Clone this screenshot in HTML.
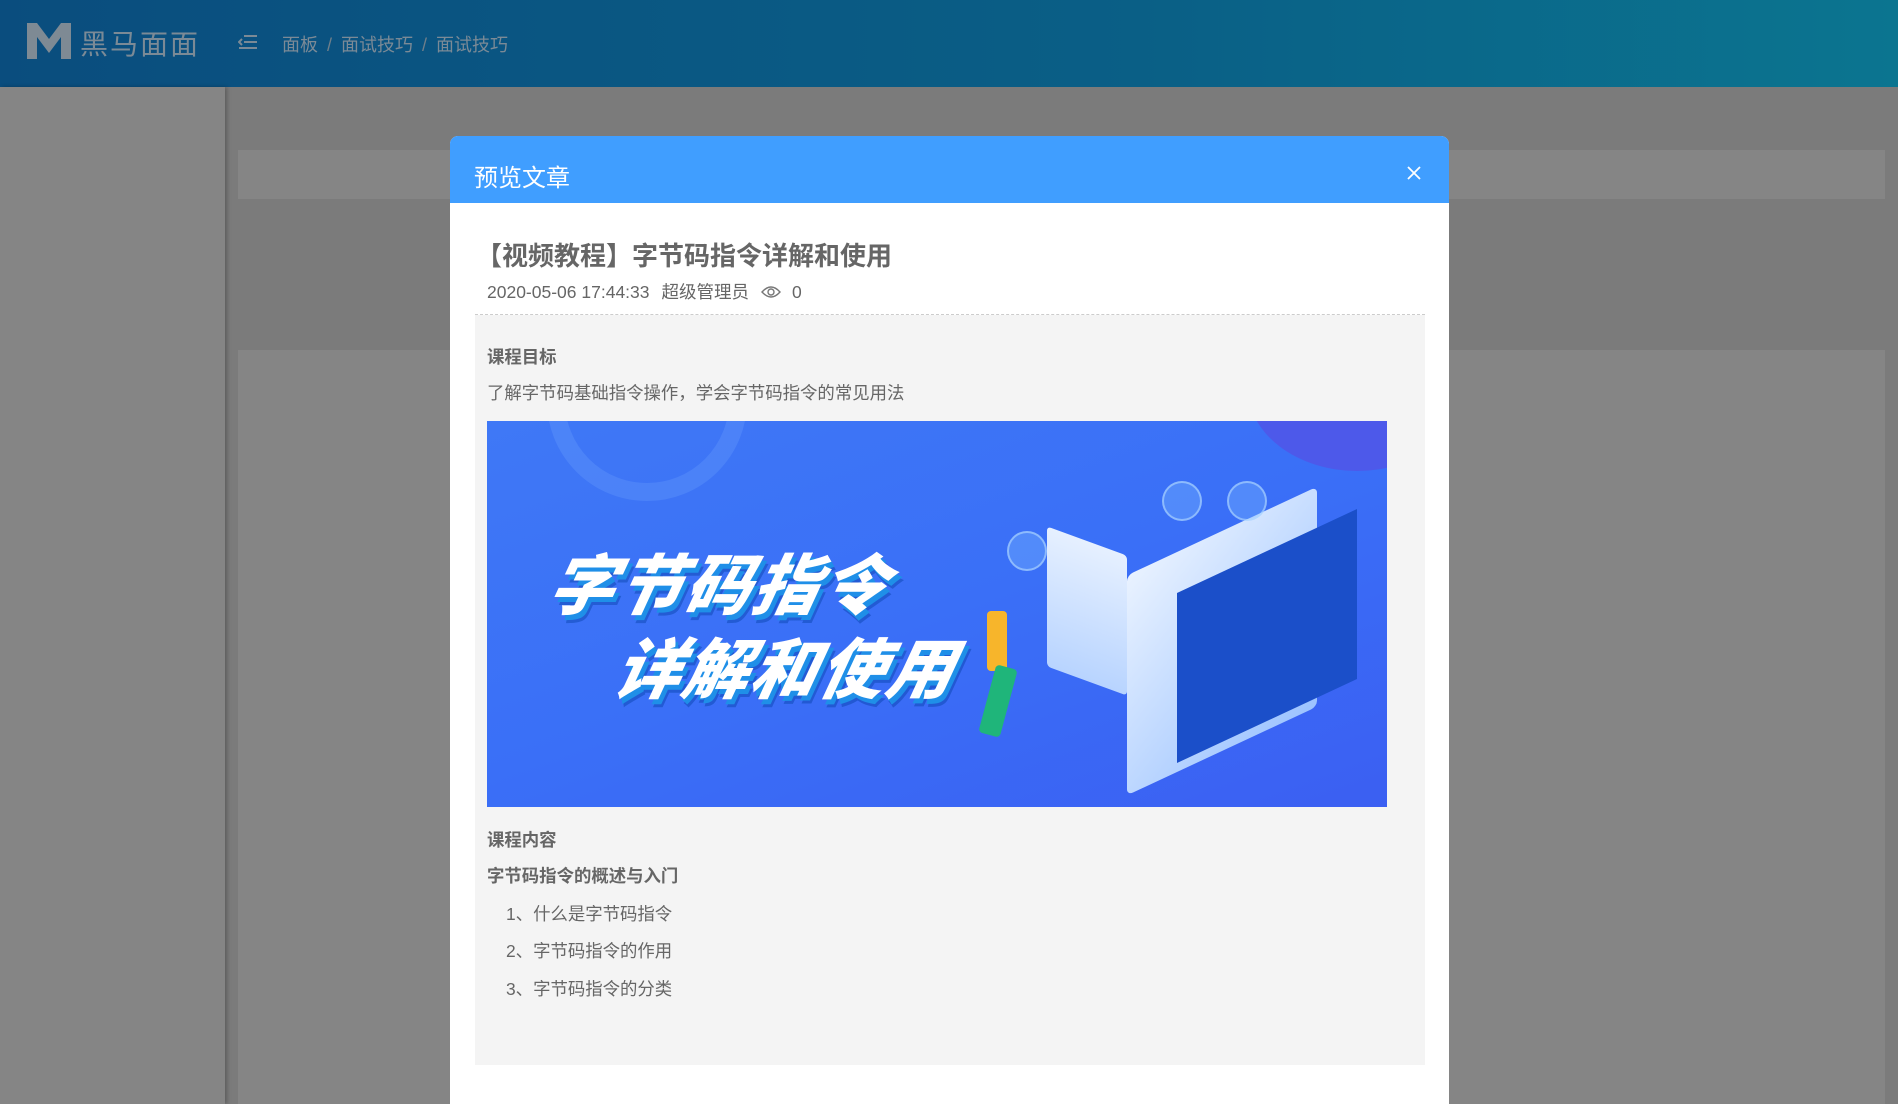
<!DOCTYPE html>
<html><head><meta charset="utf-8">
<style>
*{margin:0;padding:0;box-sizing:border-box}
html{width:1898px;height:1104px;overflow:hidden}
body{width:1898px;height:1104px;overflow:hidden;position:relative;background:#7b7b7b;font-family:"Liberation Sans","Noto Sans CJK SC",sans-serif}
.hdr{position:absolute;left:0;top:0;width:1898px;height:87px;background:linear-gradient(90deg,#0a4d7e,#0a5f86 60%,#0b7590)}
.logo{position:absolute;left:27px;top:23px}
.brand{position:absolute;left:80px;top:23px;font-size:28px;color:#7b8a96;letter-spacing:2px}
.menu{position:absolute;left:238px;top:34px}
.bc{position:absolute;left:282px;top:31px;font-size:18px;color:#7b8a96}
.bc span{margin:0 9px;color:#6f7f8a}
.side{position:absolute;left:0;top:87px;width:225px;height:1017px;background:#858585;box-shadow:2px 0 4px rgba(0,0,0,.25)}
.p1{position:absolute;left:238px;top:150px;width:1647px;height:49px;background:#858585}
.p2{position:absolute;left:238px;top:350px;width:1647px;height:754px;background:#858585}
.modal{position:absolute;left:450px;top:136px;width:999px;height:968px;background:#fff;border-radius:8px 8px 0 0;overflow:hidden}
.mh{height:67px;background:#409eff;position:relative}
.mh .t{position:absolute;left:24px;top:22px;font-size:24px;color:#fff}
.mh .x{position:absolute;left:957px;top:30px}
.title{position:absolute;left:26px;top:100px;font-size:26px;font-weight:bold;color:#666}
.meta{position:absolute;left:37px;top:143px;font-size:17.5px;color:#666}
.meta span{margin-right:12px}
.line{position:absolute;left:25px;top:178px;width:950px;border-top:1px dashed #ccc}
.content{position:absolute;left:25px;top:179px;width:950px;height:750px;background:#f4f4f4}
.c{position:absolute;font-size:17.4px;color:#666}
.b{font-weight:bold}
.img{position:absolute;left:37px;top:285px;width:900px;height:386px;background:linear-gradient(160deg,#3f78f6,#3a6ff7 50%,#3b5ff2);overflow:hidden}
.big{position:absolute;font-size:66px;font-weight:900;font-style:italic;color:#fff;letter-spacing:2px;text-shadow:4px 5px 0 #1f8fe8,6px 8px 0 rgba(0,60,160,.4);transform:skewX(-12deg)}
</style></head><body>
<div class="hdr">
<svg class="logo" width="44" height="36" viewBox="0 0 44 36"><path d="M0 0h10l12 16L34 0h10v36h-10V14L22 30 10 14v22H0z" fill="#7e8a94"/></svg>
<div class="brand">黑马面面</div>
<svg class="menu" width="20" height="16" viewBox="0 0 20 16"><path d="M6 2h13M6 8h13M1 14h18M4 5L1 8l3 3" stroke="#7b8a96" stroke-width="2" fill="none"/></svg>
<div class="bc">面板<span>/</span>面试技巧<span>/</span>面试技巧</div>
</div>
<div class="side"></div>
<div class="p1"></div>
<div class="p2"></div>
<div class="modal">
<div class="mh"><div class="t">预览文章</div>
<svg class="x" width="14" height="14" viewBox="0 0 14 14"><path d="M1 1l12 12M13 1L1 13" stroke="#fff" stroke-width="1.8"/></svg></div>
<div class="title">【视频教程】字节码指令详解和使用</div>
<div class="meta"><span>2020-05-06 17:44:33</span><span>超级管理员</span><svg width="20" height="14" viewBox="0 0 20 14" style="vertical-align:-1px;margin-right:11px"><path d="M1 7Q10-3 19 7Q10 17 1 7z" stroke="#777" stroke-width="1.4" fill="none"/><circle cx="10" cy="7" r="3" stroke="#777" stroke-width="1.4" fill="none"/></svg>0</div>
<div class="content"></div>
<div class="line"></div>
<div class="c b" style="left:37px;top:208px">课程目标</div>
<div class="c" style="left:37px;top:244px">了解字节码基础指令操作，学会字节码指令的常见用法</div>
<div class="img">
<div style="position:absolute;left:60px;top:-120px;width:200px;height:200px;border-radius:50%;border:18px solid rgba(120,170,255,.25)"></div>
<div style="position:absolute;left:760px;top:-120px;width:220px;height:170px;border-radius:50%;background:#5254e6;opacity:.8"></div>
<div style="position:absolute;left:640px;top:110px;width:190px;height:220px;background:linear-gradient(140deg,#e9f2ff,#9cc3ff);transform:skewY(-25deg);border-radius:6px"></div>
<div style="position:absolute;left:690px;top:130px;width:180px;height:170px;background:#1b4fc9;transform:skewY(-25deg)"></div>
<div style="position:absolute;left:560px;top:120px;width:80px;height:140px;background:linear-gradient(#e6f0ff,#b8d4ff);transform:skewY(20deg);border-radius:4px"></div>
<div style="position:absolute;left:520px;top:110px;width:40px;height:40px;border-radius:50%;border:2px solid rgba(180,220,255,.6);background:rgba(120,180,255,.4)"></div>
<div style="position:absolute;left:675px;top:60px;width:40px;height:40px;border-radius:50%;border:2px solid rgba(180,220,255,.6);background:rgba(120,180,255,.4)"></div>
<div style="position:absolute;left:740px;top:60px;width:40px;height:40px;border-radius:50%;border:2px solid rgba(180,220,255,.6);background:rgba(120,180,255,.4)"></div>
<div style="position:absolute;left:500px;top:190px;width:20px;height:60px;background:#f7b52b;border-radius:4px"></div>
<div style="position:absolute;left:500px;top:245px;width:22px;height:70px;background:#1fb57a;border-radius:4px;transform:rotate(15deg)"></div>
<div class="big" style="left:64px;top:112px">字节码指令</div>
<div class="big" style="left:130px;top:196px">详解和使用</div>
</div>
<div class="c b" style="left:37px;top:691px">课程内容</div>
<div class="c b" style="left:37px;top:727px">字节码指令的概述与入门</div>
<div class="c" style="left:56px;top:765px">1、什么是字节码指令</div>
<div class="c" style="left:56px;top:802px">2、字节码指令的作用</div>
<div class="c" style="left:56px;top:840px">3、字节码指令的分类</div>
</div>
</body></html>
